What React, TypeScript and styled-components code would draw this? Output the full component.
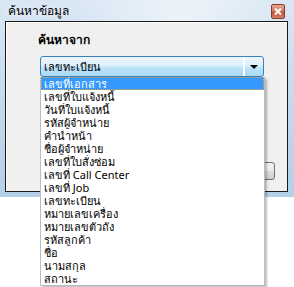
import styled, { createGlobalStyle } from "styled-components";

const GlobalStyle = createGlobalStyle`
  html, body {
    margin: 0;
    padding: 0;
    background: #ffffff;
  }
  body {
    font-family: Tahoma, "Microsoft Sans Serif", "Noto Sans", "DejaVu Sans", sans-serif;
    font-size: 12px;
    color: #000;
  }
`;

const Page = styled.div`
  width: 294px;
  height: 287px;
  overflow: hidden;
  background: #ffffff;
`;

const Window = styled.div`
  position: relative;
  width: 294px;
  height: 197px;
  box-sizing: border-box;
  display: flex;
  flex-direction: column;
  background:
    radial-gradient(ellipse at 62% 10%, rgba(255, 255, 255, 0.55), transparent 45%),
    linear-gradient(180deg, #d9e7f4 0%, #c9dcef 40%, #b4cfe9 100%);
`;

const TitleBar = styled.div`
  height: 21px;
  display: flex;
  align-items: center;
  justify-content: space-between;
  padding: 0 9px 0 8px;
`;

const Title = styled.span`
  font-size: 12px;
  color: #000;
  text-shadow: 0 0 6px rgba(255, 255, 255, 0.9);
`;

const CloseButton = styled.div`
  width: 14px;
  height: 15px;
  margin-top: 2px;
  border: 1px solid #8a3a2a;
  border-radius: 2px;
  box-sizing: border-box;
  display: grid;
  place-items: center;
  background: linear-gradient(180deg, #e8a797 0%, #d4735e 50%, #c04a32 51%, #d8826a 100%);
`;

const FrameBody = styled.div`
  flex: 1;
  padding: 0 6px 5px 5px;
  display: flex;
`;

const Client = styled.div`
  position: relative;
  flex: 1;
  background: #f0f0f0;
  border: 1px solid #1a1a1a;
  box-shadow: inset 1px 1px 0 #ffffff;
  padding: 11px 12px 0 32px;
  display: flex;
  flex-direction: column;
`;

const Label = styled.div`
  font-weight: bold;
  font-size: 12px;
  height: 14px;
  line-height: 14px;
`;

const ComboWrap = styled.div`
  position: relative;
  margin: 9px 0 0 2px;
  width: 224px;
`;

const Combo = styled.div`
  height: 21px;
  box-sizing: border-box;
  border: 1px solid #3c7fb1;
  border-radius: 3px;
  display: flex;
  align-items: stretch;
  background: linear-gradient(180deg, #ecf6fd 0%, #dcf0fc 48%, #bfe5fb 52%, #a9d8f4 100%);
`;

const ComboText = styled.div`
  flex: 1;
  padding-left: 3px;
  line-height: 19px;
  font-size: 11px;
`;

const ComboButton = styled.div`
  width: 18px;
  border-left: 2px solid #ffffff;
  display: grid;
  place-items: center;
`;

const DropList = styled.div`
  position: absolute;
  left: 0;
  top: 21px;
  width: 225px;
  box-sizing: border-box;
  background: #ffffff;
  border: 1px solid #b7bec9;
  border-top: none;
  box-shadow: 2px 2px 2px rgba(0, 0, 0, 0.25);
  z-index: 2;
`;

const Item = styled.div<{ $selected?: boolean }>`
  height: 13px;
  line-height: 13px;
  padding-left: 3px;
  box-sizing: border-box;
  font-size: 11px;
  white-space: nowrap;
  overflow: hidden;
  color: ${({ $selected }) => ($selected ? "#ffffff" : "#000000")};
  background: ${({ $selected }) => ($selected ? "#3399ff" : "transparent")};
  outline: ${({ $selected }) => ($selected ? "1px dotted #f0a23a" : "none")};
  outline-offset: -1px;
`;

const ButtonRow = styled.div`
  margin-top: auto;
  margin-bottom: 11px;
  display: flex;
  justify-content: flex-end;
  gap: 6px;
`;

const PushButton = styled.div`
  width: 75px;
  height: 18px;
  box-sizing: border-box;
  border: 1px solid #707070;
  border-radius: 3px;
  background: linear-gradient(180deg, #f2f2f2 0%, #ebebeb 50%, #dddddd 51%, #cfcfcf 100%);
  text-align: center;
  line-height: 16px;
  font-size: 11px;
`;

const items = [
  "เลขที่เอกสาร",
  "เลขที่ใบแจ้งหนี้",
  "วันที่ใบแจ้งหนี้",
  "รหัสผู้จำหน่าย",
  "คำนำหน้า",
  "ชื่อผู้จำหน่าย",
  "เลขที่ใบสั่งซ่อม",
  "เลขที่ Call Center",
  "เลขที่ Job",
  "เลขทะเบียน",
  "หมายเลขเครื่อง",
  "หมายเลขตัวถัง",
  "รหัสลูกค้า",
  "ชื่อ",
  "นามสกุล",
  "สถานะ",
];

export default function App() {
  return (
    <>
      <GlobalStyle />
      <Page>
        <Window>
          <TitleBar>
            <Title>ค้นหาข้อมูล</Title>
            <CloseButton>
              <svg width="8" height="7" viewBox="0 0 8 7">
                <path d="M1 0.5 L7 6.5 M7 0.5 L1 6.5" stroke="#ffffff" strokeWidth="2" />
              </svg>
            </CloseButton>
          </TitleBar>
          <FrameBody>
            <Client>
              <Label>ค้นหาจาก</Label>
              <ComboWrap>
                <Combo>
                  <ComboText>เลขทะเบียน</ComboText>
                  <ComboButton>
                    <svg width="8" height="4" viewBox="0 0 8 4">
                      <path d="M0 0 H8 L4 4 Z" fill="#000000" />
                    </svg>
                  </ComboButton>
                </Combo>
                <DropList>
                  {items.map((label, i) => (
                    <Item key={label} $selected={i === 0}>
                      {label}
                    </Item>
                  ))}
                </DropList>
              </ComboWrap>
              <ButtonRow>
                <PushButton>ค้นหา</PushButton>
                <PushButton>ยกเลิก</PushButton>
              </ButtonRow>
            </Client>
          </FrameBody>
        </Window>
      </Page>
    </>
  );
}
